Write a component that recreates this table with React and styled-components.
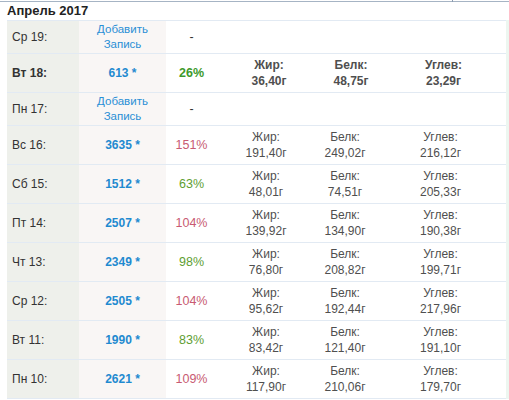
import React from 'react';
import styled, { createGlobalStyle } from 'styled-components';

const GlobalStyle = createGlobalStyle`
  html, body {
    margin: 0;
    padding: 0;
    background: #fff;
    font-family: "Liberation Sans", Arial, sans-serif;
  }
`;

const Page = styled.div`
  width: 509px;
  height: 400px;
  overflow: hidden;
  background: #fff;
`;

const TopRule = styled.div`
  position: relative;
  height: 1px;
  margin-top: 1px;
  background: #a6b4c4;

  &::after {
    content: '';
    position: absolute;
    left: 452px;
    top: -1px;
    width: 1px;
    height: 2px;
    background: #8b9bb0;
  }
`;

const Month = styled.div`
  padding-left: 7px;
  height: 18px;
  line-height: 17px;
  font-size: 13px;
  font-weight: 700;
  color: #222;
`;

const Frame = styled.div`
  display: flex;
`;

const Table = styled.div`
  margin-left: 7px;
  width: 499px;
  border-top: 1px solid #e2eaf3;
`;

const Strip = styled.div`
  width: 3px;
  background: #edf6f0;
`;

const Row = styled.div`
  display: grid;
  grid-template-columns: ${(p) => (p.$bold ? '72px 87px 51px 104px 60px 125px' : '72px 87px 51px 98px 60px 131px')};
  height: ${(p) => (p.$empty ? '32px' : '38px')};
  border-bottom: 1px solid #e2eaf3;
  font-size: 12px;
  line-height: 16px;
  font-weight: ${(p) => (p.$bold ? 700 : 400)};
`;

const DayCell = styled.div`
  display: flex;
  align-items: center;
  padding-left: 5px;
  background: #eef0eb;
  color: #333;
`;

const KcalCell = styled.div`
  display: flex;
  align-items: center;
  justify-content: center;
  text-align: center;
  background: #f9f6f5;
  color: #1f8ad0;
  font-weight: 700;
`;

const AddLink = styled.a`
  color: #2a8fd6;
  font-weight: 400;
  font-size: 11.5px;
  text-decoration: none;
  line-height: 15.5px;
`;

const PctCell = styled.div`
  display: flex;
  align-items: center;
  justify-content: center;
  color: ${(p) => p.$color};
  font-size: 12.5px;
`;

const Nutrient = styled.div`
  display: flex;
  flex-direction: column;
  align-items: center;
  justify-content: center;
  color: #4f4f4f;
`;

const days = [
  { day: 'Ср 19:', empty: true },
  { day: 'Вт 18:', kcal: '613', pct: '26%', fat: '36,40', prot: '48,75', carb: '23,29', bold: true },
  { day: 'Пн 17:', empty: true },
  { day: 'Вс 16:', kcal: '3635', pct: '151%', fat: '191,40', prot: '249,02', carb: '216,12' },
  { day: 'Сб 15:', kcal: '1512', pct: '63%', fat: '48,01', prot: '74,51', carb: '205,33' },
  { day: 'Пт 14:', kcal: '2507', pct: '104%', fat: '139,92', prot: '134,90', carb: '190,38' },
  { day: 'Чт 13:', kcal: '2349', pct: '98%', fat: '76,80', prot: '208,82', carb: '199,71' },
  { day: 'Ср 12:', kcal: '2505', pct: '104%', fat: '95,62', prot: '192,44', carb: '217,96' },
  { day: 'Вт 11:', kcal: '1990', pct: '83%', fat: '83,42', prot: '121,40', carb: '191,10' },
  { day: 'Пн 10:', kcal: '2621', pct: '109%', fat: '117,90', prot: '210,06', carb: '179,70' },
];

const pctColor = (pct, bold) => {
  const n = parseInt(pct, 10);
  if (n > 100) return '#c85a72';
  return bold ? '#3d9a2c' : '#5e9e32';
};

export default function App() {
  return (
    <Page>
      <GlobalStyle />
      <TopRule />
      <Month>Апрель 2017</Month>
      <Frame>
        <Table>
          {days.map((d) =>
            d.empty ? (
              <Row key={d.day} $empty>
                <DayCell>{d.day}</DayCell>
                <KcalCell>
                  <AddLink href="#">
                    Добавить
                    <br />
                    Запись
                  </AddLink>
                </KcalCell>
                <PctCell $color="#333">-</PctCell>
                <div />
                <div />
                <div />
              </Row>
            ) : (
              <Row key={d.day} $bold={d.bold}>
                <DayCell>{d.day}</DayCell>
                <KcalCell>{d.kcal} *</KcalCell>
                <PctCell $color={pctColor(d.pct, d.bold)}>{d.pct}</PctCell>
                <Nutrient>
                  <span>Жир:</span>
                  <span>{d.fat}г</span>
                </Nutrient>
                <Nutrient>
                  <span>Белк:</span>
                  <span>{d.prot}г</span>
                </Nutrient>
                <Nutrient>
                  <span>Углев:</span>
                  <span>{d.carb}г</span>
                </Nutrient>
              </Row>
            )
          )}
        </Table>
        <Strip />
      </Frame>
    </Page>
  );
}
